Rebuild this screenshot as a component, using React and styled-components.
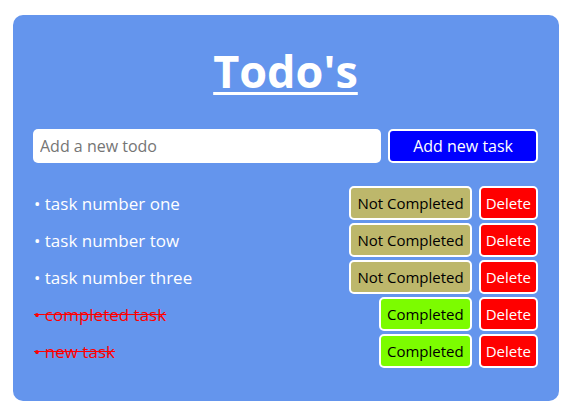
import styled, { createGlobalStyle } from "styled-components";

const GlobalStyle = createGlobalStyle`
  body {
    margin: 0;
    background: #ffffff;
    font-family: "Open Sans", "Noto Sans", sans-serif;
  }
`;

const Card = styled.main`
  margin: 15px 13px;
  width: 546px;
  height: 386px;
  box-sizing: border-box;
  padding: 0 21px 0 20px;
  background: #6495ed;
  border-radius: 10px;
  display: flex;
  flex-direction: column;
`;

const Title = styled.h1`
  margin: 25px 0 27px;
  text-align: center;
  color: #ffffff;
  font-size: 45px;
  font-weight: 700;
  line-height: 62px;
  text-decoration: underline;
  text-decoration-thickness: 3px;
  text-underline-offset: 4px;
`;

const Form = styled.form`
  display: flex;
  gap: 7px;
  margin-bottom: 23px;
`;

const Input = styled.input`
  flex: 1;
  height: 34px;
  box-sizing: border-box;
  border: none;
  border-radius: 5px;
  padding: 0 7px;
  font-family: inherit;
  font-size: 16px;
  color: #333;
  outline: none;

  &::placeholder {
    color: #757575;
  }
`;

const Button = styled.button`
  height: 34px;
  box-sizing: border-box;
  padding: 0 ${(p) => p.$pad || 5}px;
  border: 2px solid #ffffff;
  border-radius: 5px;
  background: ${(p) => p.$bg};
  color: ${(p) => p.$color || "#000"};
  font-family: inherit;
  font-size: ${(p) => p.$size || 15}px;
  cursor: pointer;
  white-space: nowrap;
`;

const List = styled.ul`
  list-style: none;
  margin: 0;
  padding: 0;
  display: flex;
  flex-direction: column;
  gap: 3px;
`;

const Item = styled.li`
  display: flex;
  align-items: center;
  justify-content: space-between;
`;

const Label = styled.span`
  padding-left: 1px;
  font-size: 17px;
  color: ${(p) => (p.$done ? "#ff0000" : "#ffffff")};
  text-decoration: ${(p) => (p.$done ? "line-through" : "none")};
`;

const Actions = styled.div`
  display: flex;
  gap: 7px;
`;

const todos = [
  { text: "task number one", done: false },
  { text: "task number tow", done: false },
  { text: "task number three", done: false },
  { text: "completed task", done: true },
  { text: "new task", done: true },
];

export default function App() {
  return (
    <>
      <GlobalStyle />
      <Card>
        <Title>Todo's</Title>
        <Form onSubmit={(e) => e.preventDefault()}>
          <Input placeholder="Add a new todo" />
          <Button type="submit" $bg="#0000ff" $color="#fff" $size={16} $pad={23}>
            Add new task
          </Button>
        </Form>
        <List>
          {todos.map((t) => (
            <Item key={t.text}>
              <Label $done={t.done}>• {t.text}</Label>
              <Actions>
                <Button $bg={t.done ? "#7cfc00" : "#bdb76b"} $pad={6}>
                  {t.done ? "Completed" : "Not Completed"}
                </Button>
                <Button $bg="#ff0000" $color="#fff">
                  Delete
                </Button>
              </Actions>
            </Item>
          ))}
        </List>
      </Card>
    </>
  );
}
